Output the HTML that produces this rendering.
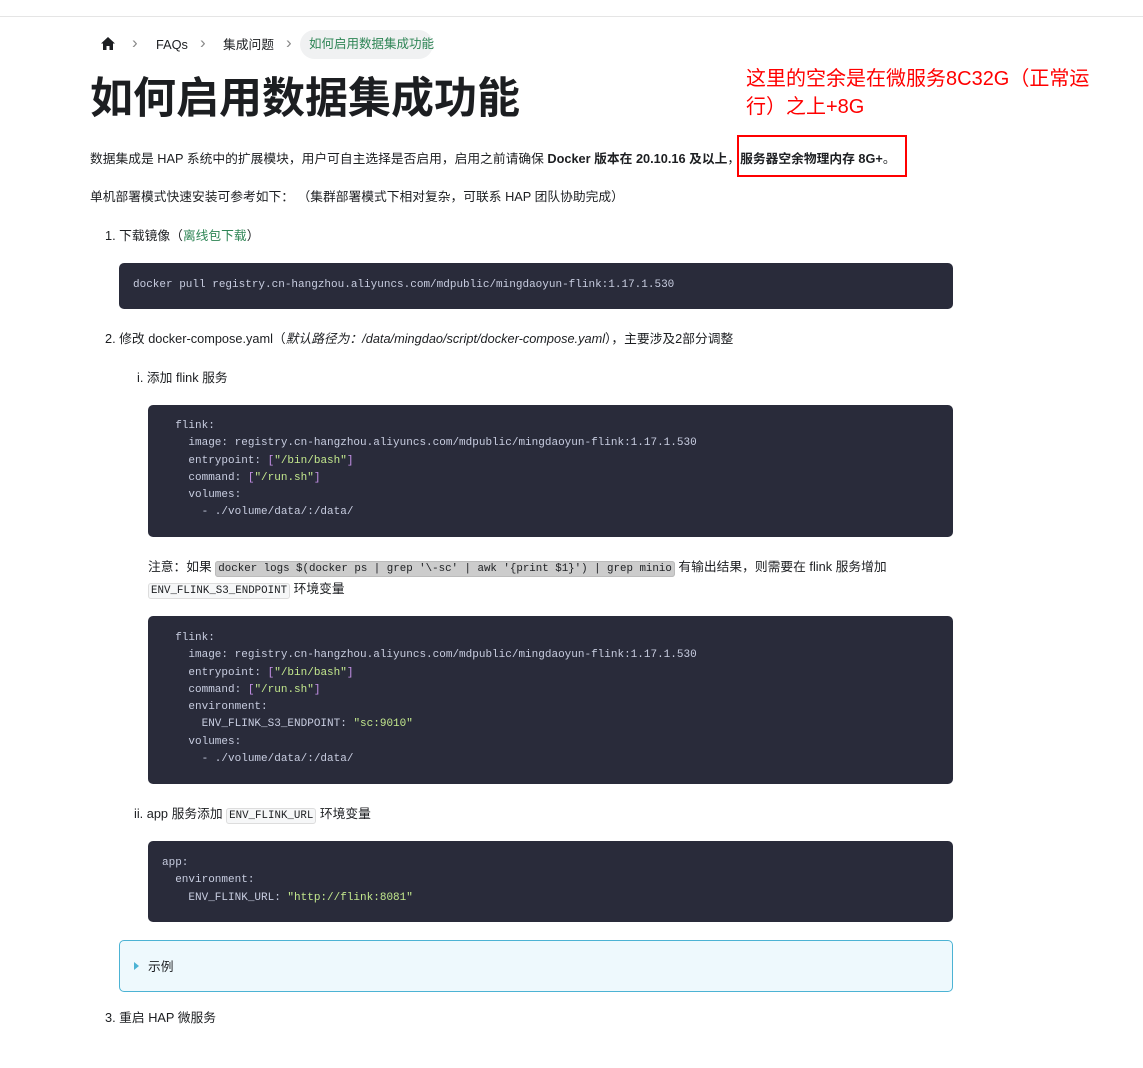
<!DOCTYPE html>
<html><head><meta charset="utf-8"><style>
*{margin:0;padding:0;box-sizing:border-box}
body{width:1143px;height:1068px;background:#fff;font-family:"Liberation Sans","Noto Sans CJK SC",sans-serif;color:#1c1e21;font-size:12.75px;position:relative;overflow:hidden}
.topline{position:absolute;left:0;right:0;top:16px;border-top:1px solid #e5e5e5}
.abs{position:absolute;white-space:nowrap;line-height:16px}
.t{margin-top:2px}
.code{position:absolute;background:#292b3a;border-radius:5px;color:#c8cde0;font-family:"Liberation Mono",monospace;font-size:11px;line-height:17.3px;white-space:pre}
.s{color:#c3e88d}.b{color:#c792ea}
.ic{font-family:"Liberation Mono",monospace;font-size:10.8px;border:1px solid #ddd;border-radius:3px;background:#f6f7f8;padding:1px 2px}
.arr{color:#888;font-size:17px}
</style></head><body>
<div class="topline"></div>
<svg class="abs" style="left:101px;top:37px" width="14" height="13" viewBox="0 0 14 13"><path d="M7 0L0 6.5h2V13h3.5V9h3v4H12V6.5h2z" fill="#1c1e21"/></svg>
<div class="abs arr" style="left:132px;top:35px">›</div>
<div class="abs" style="left:156px;top:37px">FAQs</div>
<div class="abs arr" style="left:200px;top:35px">›</div>
<div class="abs" style="left:223px;top:37px">集成问题</div>
<div class="abs arr" style="left:286px;top:35px">›</div>
<div class="abs" style="left:300px;top:30px;height:29px;width:133px;background:#f0f1f2;border-radius:15px;padding:6px 0 0 9px;color:#2e8555;font-size:12.5px">如何启用数据集成功能</div>
<div class="abs" style="left:90px;top:74px;font-size:43px;line-height:50px;font-weight:bold">如何启用数据集成功能</div>
<div class="abs" style="left:746px;top:65px;color:#f00;font-size:20px;line-height:28px;white-space:normal;width:362px">这里的空余是在微服务8C32G（正常运行）之上+8G</div>
<div class="abs" style="left:737px;top:135px;width:170px;height:42px;border:2px solid #f00"></div>
<div class="abs t" style="left:90px;top:149px">数据集成是 HAP 系统中的扩展模块，用户可自主选择是否启用，启用之前请确保 <b>Docker 版本在 20.10.16 及以上</b>，<b>服务器空余物理内存 8G+</b>。</div>
<div class="abs t" style="left:90px;top:187px">单机部署模式快速安装可参考如下： （集群部署模式下相对复杂，可联系 HAP 团队协助完成）</div>
<div class="abs t" style="left:105px;top:226px">1. 下载镜像（<span style="color:#2e8555">离线包下载</span>）</div>
<div class="code" style="left:119px;top:263px;width:834px;height:46px;padding:14px 14px">docker pull registry.cn-hangzhou.aliyuncs.com/mdpublic/mingdaoyun-flink:1.17.1.530</div>
<div class="abs t" style="left:105px;top:329px">2. 修改 docker-compose.yaml（<i>默认路径为：/data/mingdao/script/docker-compose.yaml</i>），主要涉及2部分调整</div>
<div class="abs t" style="left:137px;top:368px">i. 添加 flink 服务</div>
<div class="code" style="left:148px;top:405px;width:805px;height:132px;padding:13px 14px">  flink:
    image: registry.cn-hangzhou.aliyuncs.com/mdpublic/mingdaoyun-flink:1.17.1.530
    entrypoint: <span class="b">[</span><span class="s">"/bin/bash"</span><span class="b">]</span>
    command: <span class="b">[</span><span class="s">"/run.sh"</span><span class="b">]</span>
    volumes:
      - ./volume/data/:/data/</div>
<div class="abs t" style="left:148px;top:557px">注意：如果 <span class="ic" style="background:#ccc;border-color:#bbb">docker logs $(docker ps | grep '\-sc' | awk '{print $1}') | grep minio</span> 有输出结果，则需要在 flink 服务增加</div>
<div class="abs t" style="left:148px;top:579px"><span class="ic">ENV_FLINK_S3_ENDPOINT</span> 环境变量</div>
<div class="code" style="left:148px;top:616px;width:805px;height:168px;padding:14px 14px">  flink:
    image: registry.cn-hangzhou.aliyuncs.com/mdpublic/mingdaoyun-flink:1.17.1.530
    entrypoint: <span class="b">[</span><span class="s">"/bin/bash"</span><span class="b">]</span>
    command: <span class="b">[</span><span class="s">"/run.sh"</span><span class="b">]</span>
    environment:
      ENV_FLINK_S3_ENDPOINT: <span class="s">"sc:9010"</span>
    volumes:
      - ./volume/data/:/data/</div>
<div class="abs t" style="left:134px;top:804px">ii. app 服务添加 <span class="ic">ENV_FLINK_URL</span> 环境变量</div>
<div class="code" style="left:148px;top:841px;width:805px;height:81px;padding:14px 14px">app:
  environment:
    ENV_FLINK_URL: <span class="s">"http://flink:8081"</span></div>
<div class="abs" style="left:119px;top:940px;width:834px;height:52px;border:1px solid #4cb3d4;border-radius:5px;background:#eef9fd"></div>
<div class="abs" style="left:134px;top:962px;width:0;height:0;border-left:5px solid #4cb3d4;border-top:4px solid transparent;border-bottom:4px solid transparent"></div>
<div class="abs t" style="left:148px;top:957px">示例</div>
<div class="abs t" style="left:105px;top:1008px">3. 重启 HAP 微服务</div>
</body></html>
